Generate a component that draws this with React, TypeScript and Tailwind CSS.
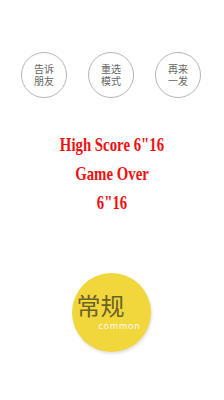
import React from "react";

const Btn = ({ a, b }: { a: string; b: string }) => (
  <div className="w-[46px] h-[46px] rounded-full border-[1.5px] border-[#b5b5b5] flex flex-col items-center justify-center text-[10px] leading-[12px] text-[#666666] [font-family:'Noto_Sans_CJK_SC',sans-serif]">
    <span className="block">{a}</span>
    <span className="block">{b}</span>
  </div>
);

export default function App() {
  return (
    <div className="w-[224px] h-[400px] bg-white overflow-hidden flex flex-col">
      <div className="flex pt-[52px] pl-[21px] gap-[21px]">
        <Btn a="告诉" b="朋友" />
        <Btn a="重选" b="模式" />
        <Btn a="再来" b="一发" />
      </div>
      <div className="mt-[32px] flex flex-col items-center text-[#ee1111] font-bold text-[19px] leading-[29px] [font-family:'Liberation_Serif',serif] scale-x-[0.78]">
        <div className="whitespace-nowrap">High Score 6"16</div>
        <div className="whitespace-nowrap">Game Over</div>
        <div className="whitespace-nowrap">6"16</div>
      </div>
      <div className="mt-[56px] self-center ml-[-2px] w-[79px] h-[79px] rounded-full bg-[#f1d63c] shadow-[1px_2px_3px_rgba(0,0,0,0.12)] flex flex-col pt-[17px] pl-[5px]">
        <div className="text-[24px] leading-[30px] text-[#6b6326] [font-family:'Noto_Sans_CJK_SC',sans-serif]">常规</div>
        <div className="ml-[22px] mt-[1px] text-[9px] leading-[10px] tracking-[0.8px] text-white [font-family:'Open_Sans',sans-serif]">common</div>
      </div>
    </div>
  );
}
